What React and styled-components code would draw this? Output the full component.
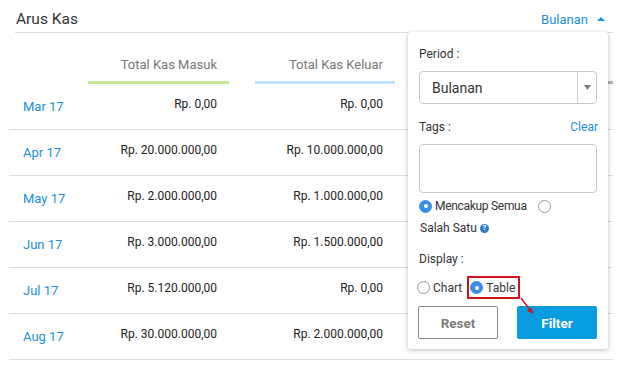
import React from 'react';
import styled, { createGlobalStyle } from 'styled-components';

const COLORS = {
  link: '#1c8fdb',
  text: '#333333',
  muted: '#777777',
  line: '#dedede',
  radio: '#3b8ee8',
  red: '#d3121c',
  filter: '#079ce0',
};

const rows = [
  { month: 'Mar 17', masuk: 'Rp. 0,00', keluar: 'Rp. 0,00' },
  { month: 'Apr 17', masuk: 'Rp. 20.000.000,00', keluar: 'Rp. 10.000.000,00' },
  { month: 'May 17', masuk: 'Rp. 2.000.000,00', keluar: 'Rp. 1.000.000,00' },
  { month: 'Jun 17', masuk: 'Rp. 3.000.000,00', keluar: 'Rp. 1.500.000,00' },
  { month: 'Jul 17', masuk: 'Rp. 5.120.000,00', keluar: 'Rp. 0,00' },
  { month: 'Aug 17', masuk: 'Rp. 30.000.000,00', keluar: 'Rp. 2.000.000,00' },
];

const GlobalStyle = createGlobalStyle`
  body {
    margin: 0;
    background: #ffffff;
    font-family: Roboto, "Liberation Sans", Arial, sans-serif;
    color: ${COLORS.text};
  }
`;

const App = () => {
  return (
    <>
      <GlobalStyle />
      <Card>
        <Header>
          <Title>Arus Kas</Title>
          <PeriodToggle>
            Bulanan
            <Caret />
          </PeriodToggle>
        </Header>

        <ColumnHeads>
          <span />
          <ColumnHead $bar="#c6e798">Total Kas Masuk</ColumnHead>
          <ColumnHead $bar="#bfe2f6">Total Kas Keluar</ColumnHead>
          <ColumnHead $bar="#b5b5b5">Saldo</ColumnHead>
        </ColumnHeads>

        {rows.map((r) => (
          <Row key={r.month}>
            <Month>{r.month}</Month>
            <Amount>{r.masuk}</Amount>
            <Amount>{r.keluar}</Amount>
            <span />
          </Row>
        ))}

        <Popover>
          <Label>Period :</Label>
          <Select>
            <SelectValue>Bulanan</SelectValue>
            <SelectArrow>
              <svg width="7" height="5" viewBox="0 0 7 5">
                <polygon points="0,0 7,0 3.5,5" fill="#7a7a7a" />
              </svg>
            </SelectArrow>
          </Select>

          <LabelRow>
            <Label>Tags :</Label>
            <ClearLink>Clear</ClearLink>
          </LabelRow>
          <TagBox />

          <RadioRow $gap={11} $top={5}>
            <RadioOption>
              <Radio $checked />
              <RadioText $tight>Mencakup Semua</RadioText>
            </RadioOption>
            <RadioOption>
              <Radio />
            </RadioOption>
          </RadioRow>
          <HelpLine>
            Salah Satu
            <HelpIcon>?</HelpIcon>
          </HelpLine>

          <Label $top={15}>Display :</Label>
          <RadioRow $gap={5} $top={9}>
            <RadioOption $shift={-2}>
              <Radio />
              <RadioText>Chart</RadioText>
            </RadioOption>
            <Highlight>
              <RadioOption>
                <Radio $checked />
                <RadioText>Table</RadioText>
              </RadioOption>
            </Highlight>
          </RadioRow>

          <Buttons>
            <ResetButton>Reset</ResetButton>
            <FilterButton>Filter</FilterButton>
          </Buttons>

          <Pointer width="16" height="20" viewBox="0 0 16 20">
            <line x1="0" y1="1" x2="9" y2="13" stroke={COLORS.red} strokeWidth="1.4" />
            <polygon points="12,17 6,14 10.8,10.4" fill={COLORS.red} />
          </Pointer>
        </Popover>
      </Card>
    </>
  );
};

const Card = styled.div`
position: relative;
margin-left: 9px;
width: 604px;
`
const Header = styled.div`
display: flex;
align-items: center;
justify-content: space-between;
height: 32px;
margin-left: 6px;
padding: 0 8px 0 1px;
border-bottom: 1px solid ${COLORS.line};
`
const Title = styled.span`
font-size: 15.5px;
color: #333;
margin-top: 6px;
`
const PeriodToggle = styled.span`
display: flex;
align-items: center;
gap: 9px;
font-size: 13px;
color: ${COLORS.link};
margin-top: 6px;
`
const Caret = styled.span`
width: 0;
height: 0;
border-left: 4px solid transparent;
border-right: 4px solid transparent;
border-bottom: 4px solid ${COLORS.link};
`
const grid = `
display: grid;
grid-template-columns: 53px 141px 140px 1fr;
column-gap: 26px;
`
const ColumnHeads = styled.div`
${grid}
height: 51px;
align-items: end;
`
const ColumnHead = styled.div`
font-size: 13px;
color: ${COLORS.muted};
text-align: right;
padding-right: 12px;
padding-bottom: 9px;
white-space: nowrap;
border-bottom: 3px solid ${(p) => p.$bar};
`
const Row = styled.div`
${grid}
box-sizing: border-box;
height: 46px;
align-items: center;
border-bottom: 1px solid ${COLORS.line};
`
const Month = styled.span`
padding-left: 14px;
font-size: 13px;
white-space: nowrap;
color: ${COLORS.link};
`
const Amount = styled.span`
text-align: right;
padding-right: 12px;
padding-bottom: 5px;
font-size: 12px;
white-space: nowrap;
color: #222;
`
const Popover = styled.div`
position: absolute;
left: 399px;
top: 32px;
width: 200px;
height: 317px;
box-sizing: border-box;
display: flex;
flex-direction: column;
padding: 14px 11px 10px 11px;
background: #ffffff;
border-radius: 2px;
box-shadow: 0 1px 4px rgba(0, 0, 0, 0.28);
`
const Label = styled.div`
font-size: 12px;
line-height: 16px;
color: #333;
margin-top: ${(p) => (p.$top || 0)}px;
`
const LabelRow = styled.div`
display: flex;
justify-content: space-between;
align-items: center;
margin-top: 15px;
`
const ClearLink = styled.span`
font-size: 12px;
line-height: 16px;
color: ${COLORS.link};
margin-right: -1px;
`
const Select = styled.div`
display: flex;
align-items: stretch;
height: 33px;
margin-top: 9px;
box-sizing: border-box;
border: 1px solid #c8c8c8;
border-radius: 4px;
`
const SelectValue = styled.span`
flex: 1;
display: flex;
align-items: center;
padding-left: 12px;
font-size: 14px;
color: #333;
`
const SelectArrow = styled.span`
width: 18px;
display: flex;
align-items: center;
justify-content: center;
border-left: 1px solid #d0d0d0;
`
const TagBox = styled.div`
height: 49px;
margin-top: 9px;
box-sizing: border-box;
border: 1px solid #c8c8c8;
border-radius: 4px;
`
const RadioRow = styled.div`
display: flex;
align-items: center;
gap: ${(p) => p.$gap}px;
margin-top: ${(p) => p.$top}px;
`
const RadioOption = styled.span`
display: flex;
align-items: center;
gap: 3px;
margin-left: ${(p) => (p.$shift || 0)}px;
`
const Radio = styled.span`
position: relative;
width: 13px;
height: 13px;
box-sizing: border-box;
border-radius: 50%;
border: 1px solid ${(p) => (p.$checked ? COLORS.radio : '#9a9a9a')};
background: ${(p) => (p.$checked ? COLORS.radio : '#ffffff')};

&::after {
  content: '';
  display: ${(p) => (p.$checked ? 'block' : 'none')};
  position: absolute;
  left: 3.5px;
  top: 3.5px;
  width: 4px;
  height: 4px;
  border-radius: 50%;
  background: #ffffff;
}
`
const RadioText = styled.span`
font-size: 12px;
line-height: 16px;
color: #333;
letter-spacing: ${(p) => (p.$tight ? '-0.3px' : '0')};
`
const HelpLine = styled.div`
display: flex;
align-items: center;
gap: 3px;
margin-top: 6px;
padding-left: 1px;
font-size: 12px;
line-height: 16px;
color: #333;
`
const HelpIcon = styled.span`
display: inline-flex;
align-items: center;
justify-content: center;
width: 9px;
height: 9px;
border-radius: 50%;
background: #2d7cc0;
color: #ffffff;
font-size: 7.5px;
font-weight: 700;
line-height: 1;
`
const Highlight = styled.span`
display: flex;
align-items: center;
height: 23px;
box-sizing: border-box;
padding: 0 3px 0 1px;
border: 2px solid ${COLORS.red};
`
const Buttons = styled.div`
display: flex;
justify-content: space-between;
margin-top: 7px;
`
const buttonBase = `
width: 80px;
height: 33px;
box-sizing: border-box;
display: flex;
align-items: center;
justify-content: center;
border-radius: 2px;
font-size: 13.5px;
font-weight: 700;
`
const ResetButton = styled.div`
${buttonBase}
margin-left: -1px;
border: 1px solid #8c8c8c;
color: #7d7d7d;
background: #ffffff;
`
const FilterButton = styled.div`
${buttonBase}
background: ${COLORS.filter};
color: #ffffff;
`
const Pointer = styled.svg`
position: absolute;
left: 113px;
top: 265px;
`

export default App
